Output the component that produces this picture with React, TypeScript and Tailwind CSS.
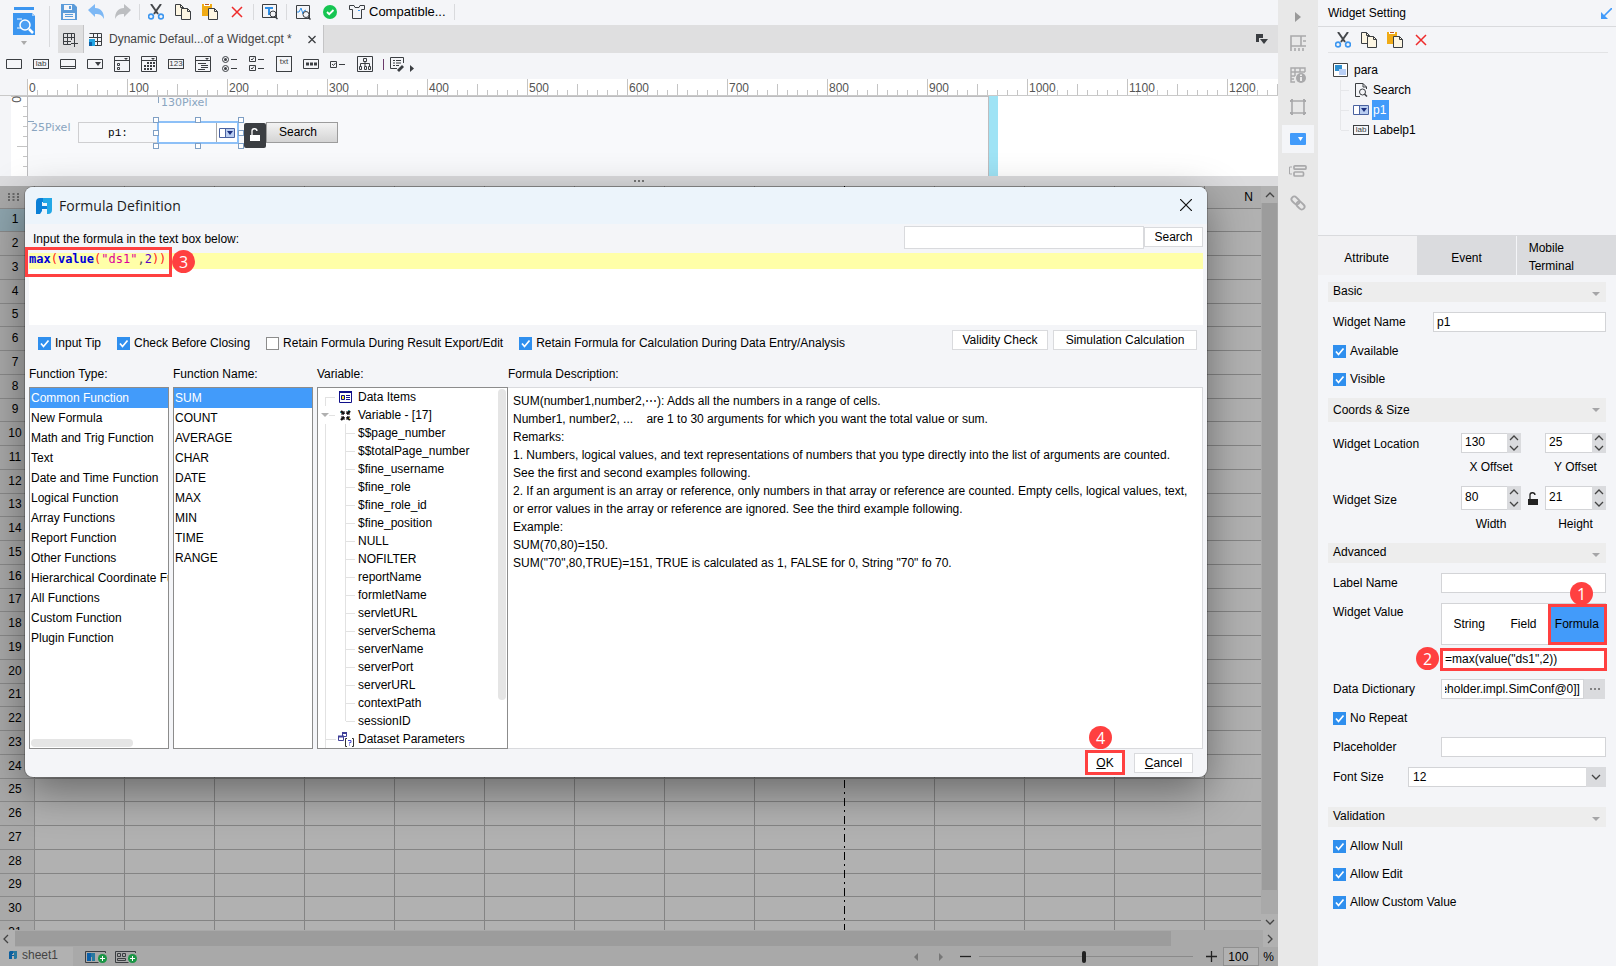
import { useEffect, useRef } from "react";
import type { ReactNode } from "react";

const INK = "#3b3e42";

function Svg({ w = 16, h = 16, vb, children }: { w?: number; h?: number; vb?: string; children: ReactNode }) {
  return (
    <svg width={w} height={h} viewBox={vb ?? `0 0 ${w} ${h}`} fill="none" className="block shrink-0" aria-hidden="true">
      {children}
    </svg>
  );
}

function IconButton({ label, children }: { label: string; children: ReactNode }) {
  return (
    <button type="button" aria-label={label} className="flex size-4 shrink-0 items-center justify-center">
      {children}
    </button>
  );
}

/* ---------- toolbar icons ---------- */

const Save = () => (
  <Svg>
    <path d="M0 0h13l3 3v13H0z" fill="#5b9bd9" />
    <path d="M3 1h8v5H3z" fill="#f4f5f8" />
    <path d="M8 2h2v3H8z" fill="#5b9bd9" />
    <path d="M2 9h12v6H2z" fill="#f4f5f8" />
    <path d="M4 10.500h8M4 12.500h8" stroke="#5b9bd9" />
  </Svg>
);
const Undo = () => (
  <Svg>
    <path d="M0 6 7 0v4c6 0 9 4 9 11-2-4-4-5-9-5v3z" fill="#7db8f5" />
  </Svg>
);
const Redo = () => (
  <Svg>
    <path d="M16 6 9 0v4C3 4 0 8 0 15c2-4 4-5 9-5v3z" fill="#bcbec1" />
  </Svg>
);
const Cut = () => (
  <Svg>
    <path d="m3 0 7 10M13 0 6 10" stroke="#45484c" strokeWidth="2" />
    <circle cx="3" cy="12.500" r="2.400" stroke="#3c96f0" strokeWidth="1.600" />
    <circle cx="13" cy="12.500" r="2.400" stroke="#3c96f0" strokeWidth="1.600" />
  </Svg>
);
const Copy = () => (
  <Svg>
    <path d="M.5.500h5l3 3v8h-8z" fill="#fdf6e3" stroke={INK} />
    <path d="M5.500.500v3h3" stroke={INK} />
    <path d="M6.500 4.500h6l3 3v8h-9z" fill="#fdf6e3" stroke={INK} />
    <path d="M12.500 4.500v3h3" stroke={INK} />
  </Svg>
);
const Paste = () => (
  <Svg>
    <path d="M0 0h10v12H0z" fill="#f0ab16" />
    <path d="M2 0h6v2H2z" fill="#fff" />
    <path d="M3 0h4v1H3z" fill="#c0571f" />
    <path d="M6.500 4.500h6l3 3v8h-9z" fill="#fdf6e3" stroke={INK} />
    <path d="M12.500 4.500v3h3" stroke={INK} />
  </Svg>
);
const Del = () => (
  <Svg>
    <path d="m3 3 10 10M13 3 3 13" stroke="#ee2b2b" strokeWidth="1.500" />
  </Svg>
);
const TextFind = () => (
  <Svg>
    <path d="M.5.500h14v13H.500z" stroke={INK} />
    <path d="M3 4h8M7 4v7" stroke="#2f8fe8" strokeWidth="2" />
    <circle cx="11" cy="10" r="3" fill="#f4f5f8" stroke={INK} />
    <path d="m13 12.500 2.500 2.500" stroke={INK} strokeWidth="1.500" />
  </Svg>
);
const ChartFind = () => (
  <Svg>
    <path d="M1.500 1.500h13v13h-13z" stroke={INK} />
    <path d="M2 8h2l2-4 2 6 1-3 2-1" stroke="#2f8fe8" />
    <circle cx="11" cy="10.500" r="3" fill="#f4f5f8" stroke={INK} />
    <path d="m13 13 2.500 2.500" stroke={INK} strokeWidth="1.500" />
  </Svg>
);
const Ok = () => (
  <Svg>
    <circle cx="8" cy="8" r="7" fill="#16c552" />
    <path d="m5 8 2.200 2.200L11.500 6" stroke="#fff" strokeWidth="1.800" />
  </Svg>
);
const Shirt = () => (
  <Svg>
    <path d="M.5 1.500h4.500l1 2h4l1-2h4.500v4h-3v9h-9v-9h-3z" stroke={INK} />
    <path d="M9 6h2v1H9z" fill="#3c96f0" />
  </Svg>
);

function Magnify() {
  return (
    <Svg w={22} h={28}>
      <path d="M1 0h20v3H1z" fill="#3c96f0" />
      <path d="M0 6h19l3 3v19H0z" fill="#3c96f0" />
      <path d="M19 6v3h3z" fill="#a5cdf8" />
      <path d="M4 12h5M4 21h4" stroke="#fff" />
      <circle cx="12" cy="18" r="5" fill="#4d9ff2" stroke="#fff" strokeWidth="1.500" />
      <path d="m16 22 4 4" stroke="#fff" strokeWidth="2.500" />
    </Svg>
  );
}

/* ---------- widget palette icons ---------- */

const Box = ({ children }: { children?: ReactNode }) => (
  <Svg>
    <path d="M.5 3.500h15v9H.500z" stroke={INK} />
    {children}
  </Svg>
);
const LabBox = () => (
  <span className="flex h-[10px] w-4 items-center justify-center border border-[#3b3e42] text-[8px] leading-none text-[#3b3e42]">lab</span>
);
const palette: { name: string; icon: ReactNode }[] = [
  { name: "Text", icon: <Box /> },
  { name: "Label", icon: <LabBox /> },
  { name: "Button", icon: <Box><path d="M0 10.500h16" stroke={INK} /></Box> },
  { name: "Combo Box", icon: <Box><path d="M8 6h6l-3 4z" fill={INK} /></Box> },
  {
    name: "Combo Check Box",
    icon: (
      <Svg>
        <path d="M.5.500h15v15H.500zM0 4.500h16" stroke={INK} />
        <path d="M10 2h4l-2 2z" fill={INK} />
        <path d="M3.500 7.500h2v2h-2zM3.500 11.500h2v2h-2z" stroke={INK} />
      </Svg>
    ),
  },
  {
    name: "Date",
    icon: (
      <Svg>
        <path d="M.5.500h15v15H.500zM0 4.500h16" stroke={INK} />
        <path d="M10 2h4l-2 2z" fill={INK} />
        <path d="M6 7h8M3 10h11M3 13h9" stroke={INK} strokeWidth="2" strokeDasharray="2 1" />
      </Svg>
    ),
  },
  {
    name: "Number",
    icon: <span className="flex h-[10px] w-4 items-center justify-center border border-[#3b3e42] text-[8px] leading-none text-[#3b3e42]">123</span>,
  },
  {
    name: "Tree",
    icon: (
      <Svg>
        <path d="M.5.500h15v15H.500zM0 4.500h16M3 7.500h8M6 9.500h7M6 11.500h7M3 13.500h7" stroke={INK} />
        <path d="M10 2h4l-2 2z" fill={INK} />
      </Svg>
    ),
  },
  {
    name: "Radio Group",
    icon: (
      <Svg>
        <circle cx="3.500" cy="3.500" r="3" stroke={INK} />
        <circle cx="3.500" cy="3.500" r="1.500" fill={INK} />
        <circle cx="3.500" cy="12.500" r="3" stroke={INK} />
        <circle cx="3.500" cy="12.500" r="1.500" fill={INK} />
        <path d="M9 3.500h6M9 12.500h6" stroke={INK} />
      </Svg>
    ),
  },
  {
    name: "Check Group",
    icon: (
      <Svg>
        <path d="M.5.500h6v5h-6zM.5 9.500h6v5h-6zM9 3.500h6M9 12.500h6" stroke={INK} />
        <path d="m2 3 1 1 2-2.500M2 12l1 1 2-2.500" stroke={INK} />
      </Svg>
    ),
  },
  {
    name: "Text Area",
    icon: <span className="flex size-4 items-start justify-center border border-[#3b3e42] text-[8px] leading-[9px] text-[#3b3e42]">txt</span>,
  },
  { name: "Password", icon: <Box><path d="M3 8h11" stroke={INK} strokeWidth="3" strokeDasharray="3 1" /></Box> },
  {
    name: "Check Box",
    icon: (
      <Svg>
        <path d="M.5 5.500h6v6h-6zM9 8.500h6" stroke={INK} />
        <path d="m2 8 1.500 1.500L5.500 7" stroke={INK} />
      </Svg>
    ),
  },
  {
    name: "View Tree",
    icon: (
      <Svg>
        <path d="M.5.500h15v15H.500z" stroke={INK} />
        <path d="M6.500 2.500h3v3h-3zM2.500 10.500h2v3h-2zM7.500 10.500h2v3h-2zM11.500 10.500h2v3h-2zM8 6v4M3.500 10V7.500h9V10" stroke={INK} />
      </Svg>
    ),
  },
];

/* ---------- shared parts ---------- */

function Badge({ n, place }: { n: number; place: string }) {
  return (
    <span className={`absolute z-10 flex size-[23px] items-center justify-center rounded-full bg-[#ff4040] font-['Open_Sans',sans-serif] text-[16px] leading-none text-white ${place}`}>
      {n}
    </span>
  );
}

function Check({ label, checked = true }: { label: string; checked?: boolean }) {
  return (
    <label className="flex h-5 items-center gap-1">
      <span className="grid size-[13px] shrink-0">
        <input
          type="checkbox"
          defaultChecked={checked}
          className="peer col-start-1 row-start-1 size-[13px] appearance-none border border-[#8c8c8c] bg-white checked:border-[#2f8fee] checked:bg-[#2f8fee]"
        />
        <svg viewBox="0 0 13 13" fill="none" className="pointer-events-none invisible col-start-1 row-start-1 size-[13px] peer-checked:visible">
          <path d="m3 6.500 2.500 3L10.500 3.500" stroke="#fff" strokeWidth="1.700" />
        </svg>
      </span>
      <span className="whitespace-nowrap">{label}</span>
    </label>
  );
}

function Divider() {
  return <span className="h-4 w-px shrink-0 bg-[#d9dadd]" />;
}

function FineLogo({ s }: { s: number }) {
  return (
    <Svg w={s} h={s} vb="0 0 16 16">
      <path d="M4 4h8v12H4z" fill="#ecf4fb" />
      <path d="M0 4a4 4 0 0 1 4-4h4v4H6v4h5v3H6v2l-2 3H0z" fill="#0a7fd6" />
      <path d="M7 0h9v12a4 4 0 0 1-4 4h-1V5H7z" fill="#22a7e6" />
    </Svg>
  );
}

function SheetLogo() {
  return (
    <Svg w={8} h={8}>
      <path d="M0 1 1 0h3v3H3v5H0z" fill="#0b5f9f" />
      <path d="M4 0h4v7L7 8H5V2H4z" fill="#27789f" />
      <path d="M3 4h2v1H3z" fill="#0b5f9f" />
    </Svg>
  );
}

function ComboIcon() {
  return (
    <Svg w={16} h={10}>
      <path d="M.5.500h15v9H.500z" fill="#fff" stroke="#4a62a0" />
      <path d="M7 1h8v8H7z" fill="#b9cdf0" />
      <path d="M6.500 0v10" stroke="#4a62a0" />
      <path d="M8 3h6l-3 4z" fill="#1b2f7f" />
    </Svg>
  );
}

function LockIcon({ color }: { color: string }) {
  return (
    <Svg w={10} h={13}>
      <path d="M0 7h10v6H0z" fill={color} />
      <path d="M2 7V3.500a2.500 2.500 0 0 1 5-.500" stroke={color} strokeWidth="1.300" />
    </Svg>
  );
}

const Chevron = ({ d, color = "#444" }: { d: string; color?: string }) => (
  <Svg w={10} h={10}>
    <path d={d} stroke={color} strokeWidth="1.300" />
  </Svg>
);
const UP = "M1 7l4-4 4 4";
const DOWN = "M1 3l4 4 4-4";
const LEFT = "M7 1 3 5l4 4";
const RIGHT = "M3 1l4 4-4 4";

/* ---------- top of the designer ---------- */

function TopBar() {
  return (
    <header className="flex shrink-0 bg-[#f4f5f8]">
      <button type="button" aria-label="Menu" className="flex w-12 shrink-0 flex-col items-center gap-[6px] pt-[7px]">
        <Magnify />
        <svg width="6" height="4" viewBox="0 0 6 4" aria-hidden="true"><path d="M0 0h6L3 4z" fill="#aaa" /></svg>
      </button>
      <div className="flex w-[10px] pt-[6px]">
        <span className="ml-px h-[41px] w-px bg-[#d9dadd]" />
      </div>
      <div className="min-w-0 flex-1">
        <div className="flex h-[25px] items-center gap-2 pb-px pl-[3px]">
          <div className="flex gap-[11px]">
            <IconButton label="Save"><Save /></IconButton>
            <IconButton label="Undo"><Undo /></IconButton>
            <IconButton label="Redo"><Redo /></IconButton>
          </div>
          <Divider />
          <div className="flex gap-[11px]">
            <IconButton label="Cut"><Cut /></IconButton>
            <IconButton label="Copy"><Copy /></IconButton>
            <IconButton label="Paste"><Paste /></IconButton>
            <IconButton label="Delete"><Del /></IconButton>
          </div>
          <Divider />
          <IconButton label="Find"><TextFind /></IconButton>
          <Divider />
          <div className="flex gap-[11px]">
            <IconButton label="Analyse"><ChartFind /></IconButton>
            <IconButton label="Status"><Ok /></IconButton>
            <button type="button" className="flex items-center gap-1 text-[13px] leading-4 text-black">
              <Shirt />
              Compatible...
            </button>
          </div>
          <Divider />
        </div>
        <nav className="flex h-7 items-stretch bg-[#dfdfe0]">
          <button type="button" aria-label="New template" className="flex w-[26px] items-center justify-center border-r border-[#c4c4c6]">
            <Svg w={15} h={15}>
              <path d="M.5 1.500h11v11H.500zM0 5.500h12M0 9.500h8M4.500 1v12M8.500 1v8" stroke={INK} />
              <path d="M8 8h7v7H8z" fill="#dfdfe0" />
              <path d="M11.500 8v7M8 11.500h7" stroke={INK} />
            </Svg>
          </button>
          <div className="flex w-60 items-center border-r border-[#c4c4c6] bg-[#f4f5f8] pl-[5px]">
            <Svg w={14} h={15}>
              <path d="M.5 1.500h12v12H6M0 5.500h13M6 9.500h7M4.500 1v5M8.500 1v13" stroke={INK} />
              <path d="M0 7h6v7H0z" fill="#22a5e4" />
              <path d="M0 10h3v4H0z" fill="#0b5fa8" />
            </Svg>
            <span className="ml-[6px] flex-1 text-[12px] whitespace-nowrap text-[#444]">Dynamic Defaul...of a Widget.cpt *</span>
            <button type="button" aria-label="Close tab" className="mr-[6px]">
              <Svg w={10} h={10}><path d="m1.500 2 7 7M8.500 2l-7 7" stroke={INK} strokeWidth="1.300" /></Svg>
            </button>
          </div>
          <button type="button" aria-label="Tab list" className="mr-[10px] ml-auto flex items-center">
            <Svg w={12} h={10}>
              <path d="M0 0h7v4H3v4H0z" fill={INK} />
              <path d="M4 5h8L8 10z" fill={INK} />
            </Svg>
          </button>
        </nav>
      </div>
    </header>
  );
}

function Palette() {
  return (
    <div className="flex h-[26px] shrink-0 items-center gap-[11px] bg-[#f4f5f8] pb-1 pl-[6px]">
      {palette.map((p) => (
        <IconButton key={p.name} label={p.name}>{p.icon}</IconButton>
      ))}
      <div className="-ml-px flex items-center">
        <span className="mr-[6px] h-[11px] w-px bg-[#6b3a6b]" />
        <button type="button" aria-label="More widgets" className="flex items-end gap-1">
          <Svg>
            <path d="M13.500 7V1.500H.500v11H7M3 4.500h2M6 4.500h5M3 7h2M6 7h5M3 9.500h2M6 9.500h3" stroke={INK} />
            <path d="m7 14 5-5 2 2-5 5z" fill={INK} />
          </Svg>
          <svg width="4" height="7" viewBox="0 0 4 7" aria-hidden="true"><path d="M0 0v7l4-3.500z" fill={INK} /></svg>
        </button>
      </div>
    </div>
  );
}

const TICKS = [0, 1, 2, 3, 4, 5, 6, 7, 8, 9];

function Ruler() {
  return (
    <div className="flex h-[17px] shrink-0 overflow-hidden border-b border-[#c9c9c9] bg-white">
      <div className="w-[27px] shrink-0 bg-[#f4f5f8]" />
      {Array.from({ length: 13 }, (_, i) => (
        <div key={i} className="relative flex w-[100px] shrink-0 items-end">
          {TICKS.map((t) => (
            <span key={t} className={`w-[10px] shrink-0 border-l border-[#c4c4c4] ${t === 0 ? "h-4" : t === 5 ? "h-[11px]" : "h-[5px]"}`} />
          ))}
          <span className="absolute top-px left-[2px] text-[12px] leading-4 text-[#555]">{i * 100}</span>
        </div>
      ))}
    </div>
  );
}

function Handle({ place }: { place: string }) {
  return <span className={`absolute size-[6px] border border-[#7f9fc4] bg-white ${place}`} />;
}

function ParamPane() {
  return (
    <div className="flex h-20 shrink-0 bg-white">
      <div className="w-[11px] shrink-0 bg-[#f4f5f8]" />
      <div className="relative flex w-[17px] shrink-0 flex-col items-end overflow-hidden border-r border-[#bdbdbf] bg-white">
        {TICKS.map((t) => (
          <span key={t} className={`h-[10px] shrink-0 border-t border-[#c4c4c4] ${t === 0 ? "w-4" : t === 5 ? "w-[10px]" : "w-1"}`} />
        ))}
        <span className="absolute top-0 left-0 text-[12px] leading-3 text-[#555] [writing-mode:sideways-lr]">0</span>
      </div>
      <div className="relative w-[961px] shrink-0 border-t border-r border-[#bdbdbf] bg-[#f8f9fb] text-[12px]">
        <span className="absolute top-0 left-[130px] h-[6px] w-px bg-[#8aa5c0]" />
        <span className="absolute -top-[2px] left-[133px] font-['DejaVu_Sans',sans-serif] text-[11px] leading-4 text-[#8aa5c0]">130Pixel</span>
        <span className="absolute top-6 left-0 h-px w-[6px] bg-[#8aa5c0]" />
        <span className="absolute top-[23px] left-[3px] font-['DejaVu_Sans',sans-serif] text-[11px] leading-4 text-[#8aa5c0]">25Pixel</span>
        <div className="absolute top-[25px] left-[50px] flex h-[21px] w-20 items-center justify-center border border-[#cfcfd1] pt-[2px] font-['Liberation_Mono',monospace] text-[11px]">p1:</div>
        <div className="absolute top-[24px] left-[129px] flex h-[23px] w-[82px] items-stretch justify-end border-2 border-[#8dc0f7] bg-white">
          <span className="flex items-center border-l border-[#a9a9a9] px-[2px]"><ComboIcon /></span>
        </div>
        <Handle place="top-[20px] left-[125px]" />
        <Handle place="top-[20px] left-[167px]" />
        <Handle place="top-[20px] left-[210px]" />
        <Handle place="top-[33px] left-[125px]" />
        <Handle place="top-[33px] left-[210px]" />
        <Handle place="top-[46px] left-[125px]" />
        <Handle place="top-[46px] left-[167px]" />
        <Handle place="top-[46px] left-[210px]" />
        <button type="button" className="absolute top-[25px] left-[238px] h-[21px] w-[72px] border border-[#9c9c9c] bg-linear-to-b from-[#f3f3f3] to-[#d4d4d4] pr-2 pb-[2px]">
          Search
        </button>
        <button type="button" aria-label="Unlock" className="absolute top-[26px] left-[216px] flex h-[25px] w-[22px] items-center justify-center rounded-xs bg-[#3b3e42] pb-[2px]">
          <LockIcon color="#fff" />
        </button>
      </div>
      <div className="w-[9px] shrink-0 bg-[#9fe3f5]" />
    </div>
  );
}

/* ---------- sheet ---------- */

/* Headings of the first thirteen columns stay behind the open dialog. */
const COLUMNS = Array.from({ length: 14 }, (_, i) => (i === 13 ? "N" : ""));

function Sheet() {
  return (
    <div className="flex min-h-0 flex-1 bg-[#b1b1b1]">
      <div className="relative min-w-0 flex-1 overflow-hidden">
        <table className="w-[1295px] table-fixed border-separate border-spacing-0 text-[12px]">
          <thead>
            <tr>
              <th className="h-[23px] w-[35px] border-r border-b border-[#8a8a8a] bg-[#a9a9a9] p-0">
                <span className="flex justify-center pr-2">
                  <Svg w={11} h={8}>
                    <path d="M0 1h11M0 4h11M0 7h11" stroke="#555" strokeWidth="1.500" strokeDasharray="2 2.500" />
                  </Svg>
                </span>
              </th>
              {COLUMNS.map((c, i) => (
                <th key={i} className="border-r border-b border-[#848484] bg-[#adadad] p-0 pr-[2px] font-normal">{c}</th>
              ))}
            </tr>
          </thead>
          <tbody>
            {Array.from({ length: 31 }, (_, r) => (
              <tr key={r} className={r % 4 === 0 ? "h-[23px]" : "h-6"}>
                <th className={`border-r border-b border-[#8a8a8a] p-0 pr-1 pb-[2px] font-normal ${r === 0 ? "bg-[#8ea5ae]" : "bg-[#a9a9a9]"}`}>{r + 1}</th>
                {COLUMNS.map((_c, i) => (
                  <td key={i} className={`border-b border-[#848484] p-0 ${i === 8 ? "" : "border-r"}`} />
                ))}
              </tr>
            ))}
          </tbody>
        </table>
        <svg width="1" height="744" className="absolute top-0 left-[844px]" aria-hidden="true">
          <path d="M.5 0v744" stroke="#000" strokeDasharray="8 4 2 4" />
        </svg>
      </div>
      <div className="flex w-[17px] shrink-0 flex-col bg-[#a9a9a9]">
        <button type="button" aria-label="Scroll up" className="flex h-[17px] items-center justify-center bg-[#b1b1b1]"><Chevron d={UP} /></button>
        <div className="mx-px flex-1 bg-[#9c9c9c]" />
        <div className="h-6" />
        <button type="button" aria-label="Scroll down" className="flex h-4 items-center justify-center bg-[#b1b1b1]"><Chevron d={DOWN} /></button>
      </div>
    </div>
  );
}

function PlusDot() {
  return (
    <>
      <circle cx="17.500" cy="7.500" r="4.500" fill="#1a9645" />
      <path d="M15 7.500h5M17.500 5v5" stroke="#fff" />
    </>
  );
}

function BottomBars() {
  return (
    <>
      <div className="flex h-[17px] shrink-0 bg-[#a9a9a9]">
        <button type="button" aria-label="Scroll left" className="flex w-[15px] items-center bg-[#b1b1b1] pl-px"><Chevron d={LEFT} /></button>
        <div className="my-px flex-1 bg-[#9c9c9c]" />
        <div className="w-[92px]" />
        <button type="button" aria-label="Scroll right" className="flex w-[15px] items-center bg-[#b1b1b1] pl-[2px]"><Chevron d={RIGHT} /></button>
      </div>
      <footer className="flex h-[19px] shrink-0 items-center bg-[#a9a9a9] text-[12px]">
        <button type="button" className="flex h-full w-[73px] items-center gap-[5px] bg-[#b1b1b1] pb-[3px] pl-[9px] text-[#444]">
          <SheetLogo />
          sheet1
        </button>
        <div className="ml-3 flex gap-2">
          <button type="button" aria-label="Add sheet">
            <Svg w={22} h={12}>
              <path d="M20.500 2V.500H.500v11h13" stroke={INK} />
              <path d="M2 2h4v8H2z" fill="#0b5fa8" />
              <path d="M6 2h4v8H7V6H6z" fill="#27789f" />
              <PlusDot />
            </Svg>
          </button>
          <button type="button" aria-label="Add form">
            <Svg w={22} h={12}>
              <path d="M20.500 2V.500H.500v11h13M2.500 2.500h3v3h-3zM7.500 2.500h3v3h-3zM2.500 7.500h8v2h-8z" stroke={INK} />
              <PlusDot />
            </Svg>
          </button>
        </div>
        <div className="ml-auto flex items-center">
          <svg width="29" height="8" viewBox="0 0 29 8" className="mr-[17px]" aria-hidden="true">
            <path d="M4 0v8L0 4zM25 0v8l4-4z" fill="#777" />
          </svg>
          <button type="button" aria-label="Zoom out"><Svg w={11} h={11}><path d="M0 5.500h11" stroke="#222" strokeWidth="1.300" /></Svg></button>
          <input
            type="range"
            aria-label="Zoom"
            defaultValue={49}
            className="mx-2 h-3 w-[214px] appearance-none bg-transparent [&::-webkit-slider-runnable-track]:h-px [&::-webkit-slider-runnable-track]:bg-[#8a8a8a] [&::-webkit-slider-thumb]:-mt-[5px] [&::-webkit-slider-thumb]:h-3 [&::-webkit-slider-thumb]:w-1 [&::-webkit-slider-thumb]:appearance-none [&::-webkit-slider-thumb]:rounded-sm [&::-webkit-slider-thumb]:bg-[#222]"
          />
          <button type="button" aria-label="Zoom in" className="ml-[5px]"><Svg w={11} h={11}><path d="M0 5.500h11M5.500 0v11" stroke="#222" strokeWidth="1.300" /></Svg></button>
          <input aria-label="Zoom percent" defaultValue="100" className="ml-[6px] h-[19px] w-9 border border-[#8f8f8f] bg-[#b1b1b1] pl-1 text-[12px] outline-none" />
          <span className="mr-1 ml-1 text-[12px]">%</span>
        </div>
      </footer>
    </>
  );
}

/* ---------- formula dialog ---------- */

const FUNCTION_TYPES = [
  "Common Function", "New Formula", "Math and Trig Function", "Text", "Date and Time Function", "Logical Function",
  "Array Functions", "Report Function", "Other Functions", "Hierarchical Coordinate Function", "All Functions",
  "Custom Function", "Plugin Function",
];
const FUNCTION_NAMES = ["SUM", "COUNT", "AVERAGE", "CHAR", "DATE", "MAX", "MIN", "TIME", "RANGE"];
const VARIABLES = [
  "$$page_number", "$$totalPage_number", "$fine_username", "$fine_role", "$fine_role_id", "$fine_position", "NULL",
  "NOFILTER", "reportName", "formletName", "servletURL", "serverSchema", "serverName", "serverPort", "serverURL",
  "contextPath", "sessionID",
];
const DESCRIPTION = [
  "SUM(number1,number2,⋯): Adds all the numbers in a range of cells.",
  "Number1, number2, ...\u00a0\u00a0\u00a0 are 1 to 30 arguments for which you want the total value or sum.",
  "Remarks:",
  "1. Numbers, logical values, and text representations of numbers that you type directly into the list of arguments are counted.",
  "See the first and second examples following.",
  "2. If an argument is an array or reference, only numbers in that array or reference are counted. Empty cells, logical values, text,",
  "or error values in the array or reference are ignored. See the third example following.",
  "Example:",
  "SUM(70,80)=150.",
  "SUM(\"70\",80,TRUE)=151, TRUE is calculated as 1, FALSE for 0, String \"70\" fo 70.",
];

function PickList({ items, label, scroll }: { items: string[]; label: string; scroll?: boolean }) {
  return (
    <div role="listbox" aria-label={label} className="flex min-h-0 flex-1 flex-col overflow-hidden border border-[#8c8c8c] bg-white">
      {items.map((t, i) => (
        <button
          key={t}
          type="button"
          role="option"
          aria-selected={i === 0}
          className={`h-5 shrink-0 overflow-hidden pl-px text-left whitespace-nowrap ${i === 0 ? "bg-[#429bfa] text-white" : ""}`}
        >
          {t}
        </button>
      ))}
      {scroll && <span className="mt-auto mb-px ml-px h-2 w-[102px] rounded-full bg-[#e5e5e5]" />}
    </div>
  );
}

function VariableTree() {
  return (
    <div className="flex min-h-0 flex-1 overflow-hidden border border-[#8c8c8c] bg-white">
      <div role="tree" className="flex-1 pl-[7px] leading-[18px]">
        <div role="treeitem" className="flex h-[18px] items-center">
          <span className="mt-[9px] h-[9px] w-[10px] border-t border-l border-[#e2e2e2]" />
          <span className="ml-1 w-[19px]">
            <Svg w={13} h={12}>
              <path d="M.5.500h12v11H.500z" fill="#fff" stroke="#10108a" />
              <path d="M0 0h13v2H0z" fill="#10108a" />
              <path d="M2.500 4.500h3v4h-3z" fill="#f4e53a" stroke="#10108a" />
              <path d="M7 4.500h4M7 6.500h4M7 8.500h4" stroke="#10108a" />
            </Svg>
          </span>
          Data Items
        </div>
        <div role="treeitem" className="flex h-[18px] items-center">
          <svg width="8" height="4" viewBox="0 0 8 4" className="-ml-1" aria-hidden="true"><path d="M0 0h8L4 4z" fill="#b0b0b0" /></svg>
          <span className="h-px w-[6px] bg-[#e2e2e2]" />
          <span className="ml-[5px] w-[18px]">
            <Svg w={11} h={11}>
              <path d="M1 1l3 3M10 1 7 4M1 10l3-3M10 10 7 7" stroke="#111" strokeWidth="2.400" />
              <path d="M4 1v3H1M7 1v3h3M4 10V7H1M7 10V7h3" stroke="#111" />
              <path d="M8 0h1v1H8zM0 2h1v1H0z" fill="#2aa" />
              <path d="M9 8h1v1H9z" fill="#dc3" />
            </Svg>
          </span>
          Variable - [17]
        </div>
        <div className="border-l border-[#e2e2e2]">
          {VARIABLES.map((v, i) => (
            <div key={v} role="treeitem" className="flex h-[18px] items-stretch pl-[19px]">
              <span className={`w-px shrink-0 bg-[#e2e2e2] ${i === VARIABLES.length - 1 ? "h-[9px]" : ""}`} />
              <span className="mr-[3px] h-px w-[9px] self-center bg-[#e2e2e2]" />
              {v}
            </div>
          ))}
          <div role="treeitem" className="flex h-[18px] items-center">
            <span className="h-px w-[10px] bg-[#e2e2e2]" />
            <span className="ml-[2px] w-5">
              <Svg w={17} h={15}>
                <path d="M4.500 1.500h4v3h-4zM.500 4.500h5v4h-5z" fill="#fff" stroke="#3f3f98" />
                <path d="M4 1h5M0 4.500h6" stroke="#3f3f98" strokeWidth="2" />
                <path d="M9 6.500H7.500v8H9M14 6.500h1.500v8H14" stroke="#333" />
                <path d="M10 8.500h3v2h-1.500v1M11.500 12.500v1" stroke="#4a4ad0" />
              </Svg>
            </span>
            Dataset Parameters
          </div>
        </div>
      </div>
      <span className="mt-px mr-px h-[311px] w-2 shrink-0 rounded-full bg-[#e5e5e5]" />
    </div>
  );
}

function FormulaDialog() {
  return (
    <section
      role="dialog"
      aria-label="Formula Definition"
      className="absolute top-[187px] left-[25px] z-10 flex h-[590px] w-[1182px] flex-col rounded-lg bg-[#f4f5f8] text-[12px] shadow-[0_14px_44px_rgba(0,0,0,0.42)] ring-1 ring-black/20"
    >
      <div className="flex h-[37px] shrink-0 items-center rounded-t-lg bg-[#ecf4fb] px-[11px]">
        <FineLogo s={16} />
        <h1 className="ml-[7px] flex-1 pb-px font-['Open_Sans',sans-serif] text-[14px] text-[#1c1c1c]">Formula Definition</h1>
        <button type="button" aria-label="Close" className="mr-1 pb-px">
          <Svg w={12} h={12}><path d="m0 0 12 12M12 0 0 12" stroke="#111" strokeWidth="1.200" /></Svg>
        </button>
      </div>
      <div className="flex h-[29px] shrink-0 items-center pr-1 pl-2">
        <label htmlFor="formula" className="flex-1">Input the formula in the text box below:</label>
        <input aria-label="Search functions" className="-mt-[3px] h-[23px] w-60 border border-[#d9dadd] bg-white px-1 outline-none" />
        <button type="button" className="-mt-[3px] h-5 w-[59px] border border-[#d9dadd] bg-white">Search</button>
      </div>
      <div className="relative mr-1 ml-1 h-[72px] shrink-0 bg-white">
        <div
          id="formula"
          role="textbox"
          contentEditable
          suppressContentEditableWarning
          className="h-4 bg-[#ffffa8] pb-1 font-['DejaVu_Sans_Mono',monospace] text-[12px] leading-3 text-[#5a00c8] outline-none"
        >
          <b className="text-[#0000d8]">max</b><span className="text-[#ff2020]">(</span><b className="text-[#0000d8]">value</b>
          <span className="text-[#ff2020]">(</span><span className="text-[#dc009c]">"ds1"</span><span className="text-[#555]">,</span>2
          <span className="text-[#ff2020]">))</span>
        </div>
        <span className="pointer-events-none absolute -top-[6px] -left-1 h-[30px] w-[147px] border-3 border-[#ff4040]" />
        <Badge n={3} place="-top-[3px] left-[143px]" />
      </div>
      <div className="flex h-[36px] shrink-0 items-center pr-[10px] pl-[13px]">
        <div className="flex gap-4">
          <Check label="Input Tip" />
          <Check label="Check Before Closing" />
          <Check label="Retain Formula During Result Export/Edit" checked={false} />
          <Check label="Retain Formula for Calculation During Data Entry/Analysis" />
        </div>
        <button type="button" className="-mt-[6px] mr-[5px] ml-auto h-5 w-24 border border-[#d9dadd] bg-white">Validity Check</button>
        <button type="button" className="-mt-[6px] h-5 w-36 border border-[#d9dadd] bg-white">Simulation Calculation</button>
      </div>
      <div className="flex min-h-0 flex-1 pr-1 pl-1">
        <div className="flex w-[140px] shrink-0 flex-col">
          <h2 className="h-[26px] pt-1">Function Type:</h2>
          <PickList items={FUNCTION_TYPES} label="Function Type" scroll />
        </div>
        <div className="ml-1 flex w-[140px] shrink-0 flex-col">
          <h2 className="h-[26px] pt-1">Function Name:</h2>
          <PickList items={FUNCTION_NAMES} label="Function Name" />
        </div>
        <div className="ml-1 flex w-[191px] shrink-0 flex-col">
          <h2 className="h-[26px] pt-1">Variable:</h2>
          <VariableTree />
        </div>
        <div className="flex min-w-0 flex-1 flex-col">
          <h2 className="h-[26px] pt-1">Formula Description:</h2>
          <div className="min-h-0 flex-1 border border-l-0 border-[#d9dadd] bg-white px-[5px] pt-1 leading-[18px]">
            {DESCRIPTION.map((line) => (
              <p key={line} className="h-[18px] whitespace-nowrap">{line}</p>
            ))}
          </div>
        </div>
      </div>
      <div className="flex h-7 shrink-0 items-start justify-end pt-1 pr-[14px]">
        <div className="relative mr-3">
          <button type="button" className="h-5 w-[34px] bg-white"><u>O</u>K</button>
          <span className="pointer-events-none absolute -top-[3px] -left-[3px] h-[25px] w-10 border-3 border-[#ff4040]" />
          <Badge n={4} place="-top-[27px] left-px" />
        </div>
        <button type="button" className="h-5 w-[59px] border border-[#d9dadd] bg-white"><u>C</u>ancel</button>
      </div>
    </section>
  );
}

/* ---------- side strip and settings panel ---------- */

const G = "#a9a9ab";
const strip: { name: string; icon: ReactNode; on?: boolean }[] = [
  {
    name: "Cell Element",
    icon: (
      <Svg>
        <path d="M1 16V1h15M1 11h15M11 1v10M13 6h3M5 13v3M9 13v3M13 13v3" stroke={G} strokeWidth="1.600" />
      </Svg>
    ),
  },
  {
    name: "Cell Attribute",
    icon: (
      <Svg>
        <path d="M15 5V1H1v14h4M1 5h14M1 9h4M1 12h3M5 1v8M10 1v4" stroke={G} strokeWidth="1.400" />
        <circle cx="11" cy="11" r="5" fill={G} />
        <path d="M11 10v4M11 7.500v1.500" stroke="#fff" strokeWidth="1.500" />
      </Svg>
    ),
  },
  {
    name: "Float Element",
    icon: (
      <Svg>
        <path d="M2 2h12v12H2z" stroke={G} strokeWidth="1.600" />
        <path d="M0 1h3v2H0zM1 0h2v3H1zM13 1h3v2h-3zM13 0h2v3h-2zM0 13h3v2H0zM1 13h2v3H1zM13 13h3v2h-3zM13 13h2v3h-2z" fill={G} />
      </Svg>
    ),
  },
  {
    name: "Widget Setting",
    on: true,
    icon: (
      <Svg w={16} h={12}>
        <rect width="16" height="12" rx="1" fill="#429bfa" />
        <path d="M8 4h5l-2.500 4z" fill="#fff" />
      </Svg>
    ),
  },
  {
    name: "Condition",
    icon: (
      <Svg w={18}>
        <path d="M3 4H.500v7H3" stroke={G} />
        <rect x="5" y="2.800" width="12" height="3.400" rx="1" stroke={G} strokeWidth="1.700" />
        <rect x="5" y="9" width="9.500" height="4" rx="1" stroke={G} strokeWidth="1.700" />
      </Svg>
    ),
  },
  {
    name: "Hyperlink",
    icon: (
      <Svg>
        <g stroke={G} strokeWidth="1.900">
          <rect x="-4.500" y="-2.800" width="9" height="5.600" rx="2.800" transform="translate(5.500 5.500) rotate(45)" />
          <rect x="-4.500" y="-2.800" width="9" height="5.600" rx="2.800" transform="translate(10.500 10.500) rotate(45)" />
        </g>
      </Svg>
    ),
  },
];

function Strip() {
  return (
    <nav className="flex w-10 shrink-0 flex-col items-center bg-[#e8e8e8] pt-[7px]">
      <button type="button" aria-label="Collapse" className="flex h-5 items-center">
        <svg width="6" height="10" viewBox="0 0 6 10" aria-hidden="true"><path d="M0 0v10l6-5z" fill="#999" /></svg>
      </button>
      {strip.map((s) => (
        <button key={s.name} type="button" aria-label={s.name} className="flex h-8 items-center">
          <span className={`flex h-7 w-8 items-center justify-center ${s.on ? "bg-[#f4f5f8]" : ""}`}>{s.icon}</span>
        </button>
      ))}
    </nav>
  );
}

function SectionHead({ title, size = "h-5" }: { title: string; size?: string }) {
  return (
    <h3 className={`flex shrink-0 items-center justify-between bg-[#ededed] pr-[6px] pl-[5px] ${size}`}>
      <span className={size === "h-5" ? "pb-[3px]" : ""}>{title}</span>
      <svg width="8" height="4" viewBox="0 0 8 4" className={size === "h-5" ? "mt-1" : ""} aria-hidden="true"><path d="M0 0h8L4 4z" fill="#a5a5a7" /></svg>
    </h3>
  );
}

function Spinner({ value, label, tall }: { value: string; label: string; tall?: boolean }) {
  return (
    <span className={`flex ${tall ? "h-6" : "h-5"}`}>
      <input aria-label={label} defaultValue={value} className="min-w-0 flex-1 border border-r-0 border-[#d3d4d7] bg-white pb-[2px] pl-[3px] outline-none" />
      <span className="flex w-[14px] flex-col bg-[#dadbde]">
        <button type="button" aria-label={`Increase ${label}`} className="flex flex-1 items-center justify-center"><Chevron d={UP} /></button>
        <button type="button" aria-label={`Decrease ${label}`} className="flex flex-1 items-center justify-center"><Chevron d={DOWN} /></button>
      </span>
    </span>
  );
}

const field = "h-5 border border-[#d3d4d7] bg-white px-[3px] outline-none";

function Settings() {
  const dict = useRef<HTMLInputElement>(null);
  useEffect(() => {
    if (dict.current) dict.current.scrollLeft = dict.current.scrollWidth;
  }, []);
  return (
    <aside className="flex w-[298px] shrink-0 flex-col bg-[#f4f5f8] text-[12px]">
      <div className="flex h-[27px] shrink-0 items-center justify-between border-b border-[#d9dadd] pr-1 pl-[10px]">
        <h2>Widget Setting</h2>
        <button type="button" aria-label="Detach">
          <Svg w={11} h={11}><path d="M11 0 2 9" stroke="#429bfa" strokeWidth="1.600" /><path d="M0 4v7h7z" fill="#429bfa" /></Svg>
        </button>
      </div>
      <div className="mr-2 ml-[10px] flex h-[26px] shrink-0 items-center gap-[10px] border-b border-[#e2e3e5] pl-[7px]">
        <IconButton label="Cut widget"><Cut /></IconButton>
        <IconButton label="Copy widget"><Copy /></IconButton>
        <IconButton label="Paste widget"><Paste /></IconButton>
        <IconButton label="Delete widget"><Del /></IconButton>
      </div>
      <div role="tree" className="h-[182px] shrink-0 pt-[7px] pl-[15px]">
        <div role="treeitem" className="flex h-5 items-center gap-[6px]">
          <Svg w={15} h={14}>
            <path d="M.5.500h14v13H.500z" fill="#fff" stroke="#444" />
            <path d="M2 2h7v6H2z" fill="#2f8fcf" />
            <path d="M6 6h7v6H6z" fill="#b9cff5" />
          </Svg>
          para
        </div>
        <div className="pl-[7px]">
          <div role="treeitem" className="flex h-5 items-center">
            <span className="h-full w-px bg-[#e6e7ea]" />
            <span className="h-px w-2 bg-[#e6e7ea]" />
            <span className="ml-[6px] w-[18px]">
              <Svg w={13} h={14}>
                <path d="M11.500 6V4L8 .500H.500v13H5M8 .500V4h3.500" stroke={INK} />
                <circle cx="7.500" cy="9" r="3" stroke={INK} />
                <path d="m9.500 11 2.500 2.500" stroke={INK} strokeWidth="1.500" />
              </Svg>
            </span>
            Search
          </div>
          <div role="treeitem" className="flex h-5 items-center">
            <span className="h-full w-px bg-[#e6e7ea]" />
            <span className="mr-1 h-px w-2 bg-[#e6e7ea]" />
            <ComboIcon />
            <span className="ml-[3px] flex h-5 items-center bg-[#429bfa] pr-[3px] pl-px text-white">p1</span>
          </div>
          <div role="treeitem" className="flex h-5 items-center">
            <span className="h-[10px] w-px self-start bg-[#e6e7ea]" />
            <span className="mr-1 h-px w-2 bg-[#e6e7ea]" />
            <LabBox />
            <span className="ml-1">Labelp1</span>
          </div>
        </div>
      </div>
      <div role="tablist" className="grid h-[37px] shrink-0 grid-cols-3 border-t border-[#d9dadd] text-[12px]">
        <button type="button" role="tab" aria-selected="true" className="bg-[#f1f1f3] pt-1 pr-[2px]">Attribute</button>
        <button type="button" role="tab" className="border-r border-[#f4f5f8] bg-[#dadbde] pt-1">Event</button>
        <button type="button" role="tab" className="bg-[#dadbde] pt-[3px] pr-8 pl-3 text-left leading-[18px]">Mobile Terminal</button>
      </div>

      <div className="flex flex-col pt-[10px] pr-[10px] pl-[10px]">
        <SectionHead title="Basic" />
        <div className="flex flex-col pl-[5px]">
          <label className="mt-[10px] flex items-center justify-between">
            Widget Name
            <input defaultValue="p1" className={`${field} w-[173px]`} />
          </label>
          <div className="mt-[9px] mb-[9px] flex flex-col gap-2">
            <Check label="Available" />
            <Check label="Visible" />
          </div>
        </div>

        <SectionHead title="Coords & Size" size="h-6" />
        <div className="mt-[10px] grid grid-cols-[1fr_60px_24px_61px] items-center pl-[5px]">
          <span className="pt-[3px]">Widget Location</span>
          <Spinner value="130" label="X Offset" />
          <span />
          <Spinner value="25" label="Y Offset" />
          <span />
          <span className="mt-1 mb-[9px] text-center leading-5">X Offset</span>
          <span />
          <span className="mt-1 mb-[9px] text-center leading-5">Y Offset</span>
          <span className="pt-[3px]">Widget Size</span>
          <Spinner value="80" label="Width" tall />
          <button type="button" aria-label="Lock ratio" className="flex justify-center"><LockIcon color="#222" /></button>
          <Spinner value="21" label="Height" tall />
          <span />
          <span className="mt-1 mb-[9px] text-center leading-5">Width</span>
          <span />
          <span className="mt-1 mb-[9px] text-center leading-5">Height</span>
        </div>

        <SectionHead title="Advanced" />
        <div className="flex flex-col pl-[5px]">
          <label className="mt-[10px] flex items-center justify-between">
            Label Name
            <input className={`${field} w-[165px]`} />
          </label>
          <div className="mt-[10px] flex justify-between">
            <span className="leading-[18px]">Widget Value</span>
            <div className="w-[165px]">
              <div className="relative grid h-[42px] grid-cols-3 border border-[#d3d4d7] bg-white">
                <button type="button">String</button>
                <button type="button">Field</button>
                <button type="button" className="bg-[#429bfa] pr-[2px]">Formula</button>
                <span className="pointer-events-none absolute top-0 -right-[2px] h-[41px] w-[59px] border-3 border-[#ff4040]" />
                <Badge n={1} place="-top-[22px] right-[12px]" />
              </div>
              <div className="relative mt-1">
                <input aria-label="Formula value" defaultValue={'=max(value("ds1",2))'} className="block h-5 w-full bg-white px-1 outline-none" />
                <span className="pointer-events-none absolute -top-px -left-px h-[23px] w-[167px] border-3 border-[#ff4040]" />
                <Badge n={2} place="-top-[2px] -left-[25px]" />
              </div>
            </div>
          </div>
          <div className="mt-[10px] flex items-center">
            <label htmlFor="dict" className="flex-1">Data Dictionary</label>
            <input id="dict" ref={dict} defaultValue="com.fr.data.impl.Placeholder.impl.SimConf@0]]" className={`${field} w-[143px]`} />
            <button type="button" aria-label="Edit dictionary" className="mr-px flex h-5 w-[21px] items-center justify-center bg-[#dadbde]">
              <Svg w={10} h={2}><path d="M0 1h2M4 1h2M8 1h2" stroke="#666" strokeWidth="1.500" /></Svg>
            </button>
          </div>
          <div className="mt-[9px]"><Check label="No Repeat" /></div>
          <label className="mt-[9px] flex items-center justify-between">
            Placeholder
            <input className={`${field} w-[165px]`} />
          </label>
          <label className="mt-[10px] mb-5 flex items-center justify-between">
            Font Size
            <span className="grid w-[198px]">
              <select defaultValue="12" className={`${field} col-start-1 row-start-1 appearance-none pl-1`}>
                <option>12</option>
                <option>14</option>
              </select>
              <span className="pointer-events-none col-start-1 row-start-1 flex w-5 items-center justify-center justify-self-end bg-[#dadbde]">
                <Chevron d={DOWN} />
              </span>
            </span>
          </label>
        </div>

        <SectionHead title="Validation" />
        <div className="mt-[9px] flex flex-col gap-2 pl-[5px]">
          <Check label="Allow Null" />
          <Check label="Allow Edit" />
          <Check label="Allow Custom Value" />
        </div>
      </div>
    </aside>
  );
}

export default function App() {
  return (
    <div className="relative flex h-screen overflow-hidden bg-[#f4f5f8] font-['Liberation_Sans',Arial,sans-serif] text-[12px] text-black">
      <main className="relative flex min-w-0 flex-1 flex-col overflow-hidden">
        <TopBar />
        <Palette />
        <Ruler />
        <ParamPane />
        <div className="flex h-[10px] shrink-0 items-center justify-center bg-[#dcdcde]">
          <Svg w={10} h={2}><path d="M0 1h2M4 1h2M8 1h2" stroke="#555" strokeWidth="1.500" /></Svg>
        </div>
        <Sheet />
        <BottomBars />
        <FormulaDialog />
      </main>
      <Strip />
      <Settings />
    </div>
  );
}
